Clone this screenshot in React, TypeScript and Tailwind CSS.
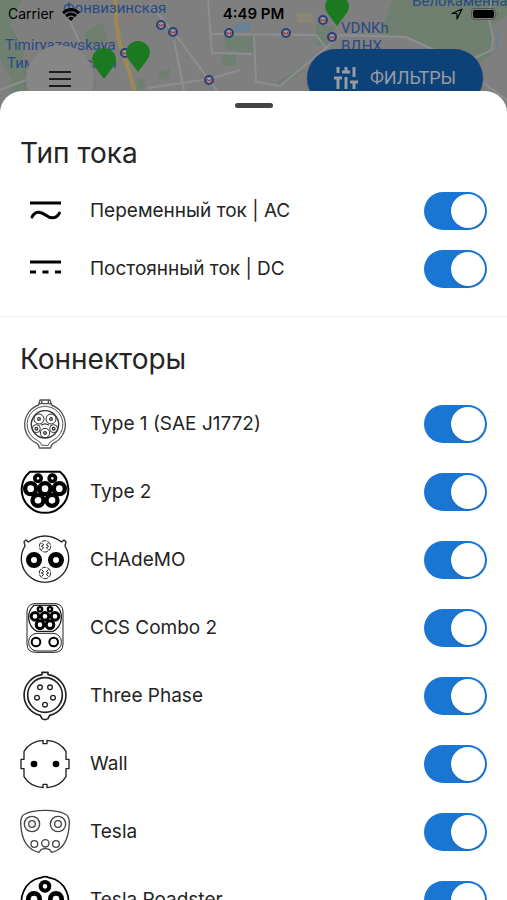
import type { ReactNode } from "react";

interface OptionRowProps {
  id: string;
  label: string;
  icon: ReactNode;
  className: string;
}

// Connector drawings share one canvas, centred on the plug
const Plug = ({ children, stroke = "#222" }: { children: ReactNode; stroke?: string }) => (
  <svg viewBox="-75 -75 150 150" fill="none" stroke={stroke} strokeWidth="4" strokeLinejoin="round" className="size-[50px]" aria-hidden="true">
    {children}
  </svg>
);

const Pin = ({ x, y, r, hole }: { x: number; y: number; r: number; hole: number }) => (
  <circle cx={x} cy={y} r={(r + hole) / 2} stroke="#000" strokeWidth={r - hole} />
);

const Socket = ({ x, y, r }: { x: number; y: number; r: number }) => (
  <>
    <circle cx={x} cy={y} r={r} strokeWidth="3" />
    <circle cx={x} cy={y} r="4" strokeWidth="4" />
  </>
);

const AcIcon = () => (
  <svg viewBox="0 0 50 50" fill="none" stroke="#000" strokeWidth="3" className="size-[50px]" aria-hidden="true">
    <path d="M10 17H41" />
    <path d="M12 31C15 25 20 25 25.500 29C31 33 36 33 39.500 27" strokeLinecap="round" />
  </svg>
);

const DcIcon = () => (
  <svg viewBox="0 0 50 50" fill="none" stroke="#000" strokeWidth="3" className="size-[50px]" aria-hidden="true">
    <path d="M10 18H41" />
    <path d="M10 28H16M22.500 28H28.500M35 28H41" />
  </svg>
);

const Type1Icon = () => (
  <Plug stroke="#555">
    <g strokeWidth="4">
      <path d="M-19 -57L-15 -72H15L19 -57A62 62 0 0 1 25 58Q18 61 17 72H-17Q-18 61 -25 58A62 62 0 0 1 -19 -57Z" />
      <path d="M-18 -50A54 54 0 0 0 -22 50Q-12 54 -10 64H10Q12 54 22 50A54 54 0 0 0 18 -50Q0 -57 -18 -50Z" strokeWidth="3" />
      <path d="M-21 -61H21M-10 -72V-61M10 -72V-61" />
      <circle cx="0" cy="1" r="41" stroke="#333" />
    </g>
    <g stroke="#333">
      <Socket x={-18} y={-15} r={15} />
      <Socket x={18} y={-15} r={15} />
      <Socket x={-26} y={14} r={12} />
      <Socket x={26} y={14} r={12} />
      <Socket x={0} y={27} r={14} />
      <path d="M-12 4Q0 -5 12 4" />
    </g>
  </Plug>
);

const Type2Icon = () => (
  <Plug stroke="#000">
    <path d="M-45 -61H45A70 70 0 1 1 -45 -61Z" strokeWidth="6" />
    <Pin x={-21} y={-41} r={15} hole={4} />
    <Pin x={22} y={-41} r={15} hole={4} />
    <Pin x={-43} y={-10} r={23} hole={10} />
    <Pin x={0} y={-10} r={23} hole={10} />
    <Pin x={43} y={-10} r={23} hole={10} />
    <Pin x={-21} y={25} r={23} hole={10} />
    <Pin x={21} y={25} r={23} hole={10} />
  </Plug>
);

const ChademoIcon = () => (
  <Plug>
    <path d="M-50 -54Q-25 -72 0 -72T50 -54L57 -60L63 -55L60 -42A71 71 0 1 1 -60 -42L-63 -55L-57 -60Z" />
    <Pin x={-33} y={0} r={24} hole={9} />
    <Pin x={33} y={0} r={24} hole={9} />
    {[-41, 39].map((y) => (
      <g key={y}>
        <circle cx="0" cy={y} r="17" strokeWidth="3" strokeDasharray="14 3" />
        <path
          d={`M-10 ${y - 10}L-4 ${y - 4}L-11 ${y}L-4 ${y + 4}L-10 ${y + 10}M10 ${y - 10}L4 ${y - 4}L11 ${y}L4 ${y + 4}L10 ${y + 10}`}
          strokeWidth="3"
        />
      </g>
    ))}
  </Plug>
);

const CcsIcon = () => (
  <Plug>
    <path d="M-34 -73H34Q54 -69 54 -48V48Q54 73 28 73H-28Q-54 73 -54 48V-48Q-54 -69 -34 -73Z" strokeWidth="3" />
    <path d="M-33 -68H33A48 48 0 0 1 24 10H-24A48 48 0 0 1 -33 -68Z" />
    <rect x="-49" y="16" width="98" height="53" rx="25" strokeWidth="3" />
    <Pin x={-15} y={-56} r={10} hole={3} />
    <Pin x={15} y={-56} r={10} hole={3} />
    <Pin x={-30} y={-35} r={16} hole={7} />
    <Pin x={0} y={-35} r={16} hole={7} />
    <Pin x={30} y={-35} r={16} hole={7} />
    <Pin x={-15} y={-10} r={16} hole={7} />
    <Pin x={15} y={-10} r={16} hole={7} />
    <Pin x={-27} y={42} r={16} hole={10} />
    <Pin x={26} y={42} r={16} hole={10} />
  </Plug>
);

const ThreePhaseIcon = () => (
  <Plug>
    <path d="M-9 -64V-71H9V-64A62 62 0 0 1 14 58L9 68Q0 74 -9 68L-14 58A62 62 0 0 1 -9 -64Z" strokeWidth="5" />
    <circle cx="0" cy="-3" r="52" strokeWidth="5" />
    <circle cx="-15" cy="-26" r="7" />
    <circle cx="15" cy="-26" r="7" />
    <circle cx="-24" cy="5" r="7" />
    <circle cx="24" cy="5" r="7" />
    <circle cx="0" cy="26" r="7" />
  </Plug>
);

const WallIcon = () => (
  <Plug>
    <path d="M-6 -71V-61H6V-71Q45 -68 63 -38V-14H72V14H63V38Q45 68 6 71V61H-6V71Q-45 68 -63 38V14H-72V-14H-63V-38Q-45 -68 -6 -71Z" />
    <circle cx="-33" cy="0" r="10" fill="#000" stroke="none" />
    <circle cx="33" cy="0" r="10" fill="#000" stroke="none" />
  </Plug>
);

const TeslaIcon = () => (
  <Plug stroke="#444">
    <path d="M-60 -54Q-40 -65 0 -65T60 -54Q73 -49 73 -26Q70 50 20 61L14 53Q0 47 -12 53L-18 61Q-70 50 -73 -26Q-73 -49 -60 -54Z" />
    <circle cx="-39" cy="-24" r="23" />
    <circle cx="-39" cy="-24" r="10" />
    <circle cx="39" cy="-24" r="23" />
    <circle cx="39" cy="-24" r="10" />
    <circle cx="-32" cy="36" r="10" />
    <circle cx="1" cy="34" r="11" />
    <circle cx="33" cy="36" r="10" />
  </Plug>
);

const RoadsterIcon = () => (
  <Plug stroke="#000">
    <path d="M-12 -67Q0 -73 12 -67A70 70 0 1 1 -12 -67Z" strokeWidth="5" />
    <Pin x={0} y={-41} r={19} hole={7} />
    <Pin x={-33} y={-3} r={24} hole={10} />
    <Pin x={33} y={-3} r={24} hole={10} />
    <Pin x={-20} y={37} r={16} hole={7} />
    <Pin x={20} y={37} r={16} hole={7} />
  </Plug>
);

const currentTypes = [
  { id: "ac", label: "Переменный ток | AC", icon: <AcIcon /> },
  { id: "dc", label: "Постоянный ток | DC", icon: <DcIcon /> },
];

const connectors = [
  { id: "type1", label: "Type 1 (SAE J1772)", icon: <Type1Icon /> },
  { id: "type2", label: "Type 2", icon: <Type2Icon /> },
  { id: "chademo", label: "CHAdeMO", icon: <ChademoIcon /> },
  { id: "ccs2", label: "CCS Combo 2", icon: <CcsIcon /> },
  { id: "three-phase", label: "Three Phase", icon: <ThreePhaseIcon /> },
  { id: "wall", label: "Wall", icon: <WallIcon /> },
  { id: "tesla", label: "Tesla", icon: <TeslaIcon /> },
  { id: "roadster", label: "Tesla Roadster", icon: <RoadsterIcon /> },
];

const metroStations = [
  [161, 25],
  [173, 32],
  [229, 33],
  [125, 53],
  [209, 80],
  [286, 33],
  [323, 20],
  [332, 37],
];

const stationPins = [
  [104, 79],
  [138, 72],
  [337, 26],
];

function OptionRow({ id, label, icon, className }: OptionRowProps) {
  return (
    <li className={`flex items-center gap-5 ${className}`}>
      {icon}
      <label htmlFor={id} className="flex-1 text-[19px] leading-6">
        {label}
      </label>
      <input
        id={id}
        type="checkbox"
        role="switch"
        defaultChecked
        className="h-[38px] w-[63px] shrink-0 cursor-pointer appearance-none rounded-full bg-gray-300 p-0.5 transition-colors before:block before:size-[34px] before:rounded-full before:bg-white before:shadow-sm before:transition-transform checked:bg-[#1976d2] checked:before:translate-x-[25px]"
      />
    </li>
  );
}

function CityMap() {
  return (
    <svg viewBox="0 0 507 116" preserveAspectRatio="xMidYMin slice" className="absolute inset-0 size-full" aria-hidden="true">
      <rect width="507" height="116" fill="#7f7f80" />
      <g fill="#6f8071">
        <path d="M0 0H22L10 26L24 48L20 92L0 60Z" />
        <path d="M84 32L102 22L108 40L88 48Z" />
        <path d="M10 60L26 66V96H12ZM158 72L170 68V78L160 80ZM136 80L146 78L144 90H138Z" />
        <path d="M224 36L236 34V50H226ZM236 36H254V52H236ZM222 54H236V66H222Z" />
        <path d="M316 24L334 26L330 48L316 44Z" />
        <path d="M278 82L302 66L304 70L280 87Z" />
        <path d="M392 0H507V16L492 26L494 52L480 62L440 58L412 38L380 34Z" />
      </g>
      <path d="M235 25L250 23V31L235 32Z" fill="#65829b" />
      <path d="M297 13H313V23H297Z" fill="#8a8677" />
      <path d="M123 12H135V22H123Z" fill="#857b79" />
      <g fill="none" stroke="#8e8e8e" strokeWidth="2">
        <path d="M66 12L82 48M150 4L178 38L218 92M174 40L184 91M148 88L209 79L240 70M208 0L212 53L252 54M212 34L316 35L326 48L280 86L256 82L254 36M326 48L340 35L406 37L434 50M470 60L492 50L493 38L488 14L492 0M482 82L507 100" />
        <path d="M0 90L26 80" />
      </g>
      <path d="M115 0Q116 40 126 62L136 96" fill="none" stroke="#9d8a53" strokeWidth="4" />
      <path d="M497 34V50" stroke="#65829b" strokeWidth="2" />
      <g fill="#2a4a83" fontSize="15" fontFamily="Roboto, sans-serif">
        <text x="63" y="13">Фонвизинская</text>
        <text x="5" y="50">Timiryazevskaya</text>
        <text x="7" y="68">Тимирязевская</text>
        <text x="341" y="33">VDNKh</text>
        <text x="341" y="51">ВДНХ</text>
        <text x="412" y="6">Белокаменная</text>
      </g>
      {metroStations.map(([x, y]) => (
        <g key={`${x}-${y}`}>
          <circle cx={x} cy={y} r="4" fill="#969696" stroke="#2a4079" strokeWidth="2" />
          <path d={`M${x - 2} ${y + 2}V${y - 1}L${x} ${y + 1}L${x + 2} ${y - 1}V${y + 2}`} fill="none" stroke="#9b3b3b" />
        </g>
      ))}
    </svg>
  );
}

function StatusBar() {
  return (
    <div className="relative flex h-7 items-center px-2 text-sm text-black">
      <div className="flex flex-1 items-center gap-2">
        <span>Carrier</span>
        <svg viewBox="0 0 18 13" fill="none" stroke="currentColor" strokeWidth="3" className="h-[13px] w-[18px]" aria-hidden="true">
          <path d="M1 5Q9 -2 17 5M4 8Q9 4 14 8" />
          <path d="M6 10Q9 7.500 12 10L9 13Z" fill="currentColor" stroke="none" />
        </svg>
      </div>
      <span className="text-[15px] font-semibold">4:49 PM</span>
      <div className="flex flex-1 items-center justify-end gap-2">
        <svg viewBox="0 0 12 12" fill="none" stroke="currentColor" strokeWidth="1.200" strokeLinejoin="round" className="size-3" aria-hidden="true">
          <path d="M11 1L1 5.500H6V11Z" />
        </svg>
        <svg viewBox="0 0 28 12" className="h-3 w-7" aria-hidden="true">
          <rect x="0.500" y="0.500" width="24" height="11" rx="3" fill="none" stroke="#555" />
          <rect x="2" y="2" width="21" height="8" rx="2" />
          <path d="M26 4Q28 6 26 8Z" fill="#555" />
        </svg>
      </div>
    </div>
  );
}

export default function App() {
  return (
    <div className="flex h-screen flex-col overflow-hidden bg-white font-[Inter,sans-serif] text-[#242424]">
      <header className="relative h-[116px] shrink-0 overflow-hidden">
        <CityMap />
        <div className="absolute inset-x-0 top-[45px] flex items-start justify-between pr-6 pl-[26px]">
          <button type="button" aria-label="Меню" className="flex size-[68px] items-center justify-center rounded-full bg-[#868686] shadow-md">
            <svg viewBox="0 0 22 16" stroke="#1c1c1c" strokeWidth="2" className="h-4 w-[22px]" aria-hidden="true">
              <path d="M0 1H22M0 8H22M0 15H22" />
            </svg>
          </button>
          <button type="button" className="mt-1 flex h-[58px] w-[176px] items-center justify-center gap-3 rounded-full bg-[#0d4278] font-[Roboto,sans-serif] text-lg text-[#969ca3] shadow-md">
            <svg viewBox="0 0 24 24" fill="none" stroke="currentColor" strokeWidth="3" className="size-6" aria-hidden="true">
              <path d="M4 1V7M12 1V5M20 1V11M0 12H8M4 12V23M8 6H16M12 11V23M16 16H24M20 16V23" />
            </svg>
            ФИЛЬТРЫ
          </button>
        </div>
        {stationPins.map(([x, y]) => (
          <svg
            key={x}
            viewBox="0 0 24 32"
            style={{ left: x - 12, top: y - 31 }}
            className="absolute h-8 w-6"
            aria-hidden="true"
          >
            <path d="M12 31L3 19Q0 15 0 12A12 12 0 0 1 24 12Q24 15 21 19Z" fill="#1b7a1f" />
          </svg>
        ))}
        <StatusBar />
      </header>

      <main className="relative -mt-[25px] min-h-0 flex-1 overflow-hidden rounded-t-[22px] bg-white pt-3">
        <div className="mx-auto h-[5px] w-[38px] rounded-full bg-[#444]" />

        <section className="border-b border-[#f0f0f0] px-5 pt-[27px] pb-[18px]">
          <h2 className="mb-[11px] text-[28px] leading-9">Тип тока</h2>
          <ul>
            {currentTypes.map((item) => (
              <OptionRow key={item.id} {...item} className="h-[58px]" />
            ))}
          </ul>
        </section>

        <section className="px-5 pt-6">
          <h2 className="mb-[13px] text-[28px] leading-9">Коннекторы</h2>
          <ul>
            {connectors.map((item) => (
              <OptionRow key={item.id} {...item} className="h-[68px]" />
            ))}
          </ul>
        </section>
      </main>
    </div>
  );
}
